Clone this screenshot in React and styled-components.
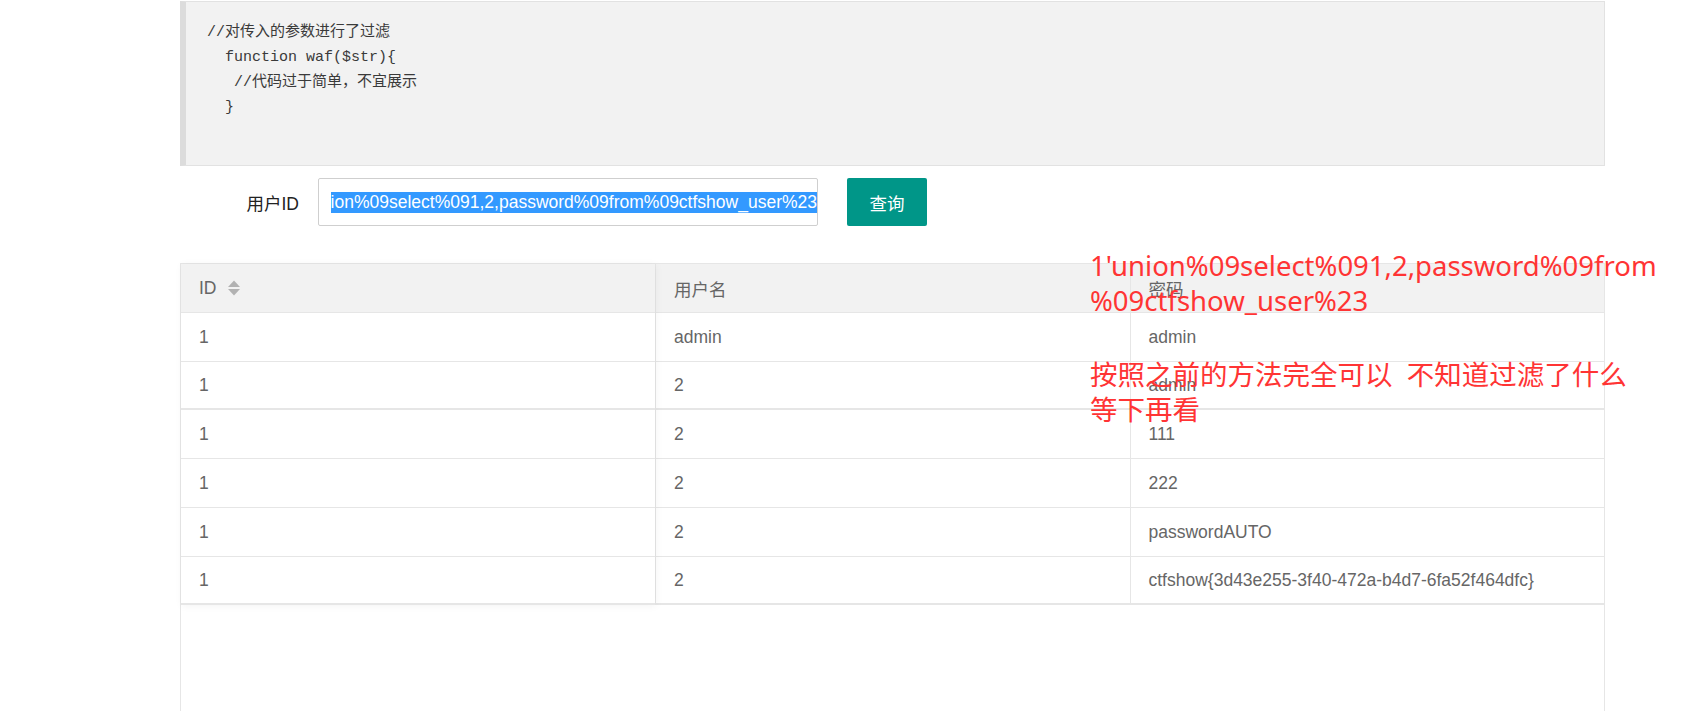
import React from "react";
import styled, { createGlobalStyle } from "styled-components";

const GlobalStyle = createGlobalStyle`
  html, body {
    margin: 0;
    padding: 0;
    background: #fff;
  }
  body {
    font-family: "Liberation Sans", Arial, "Noto Sans CJK SC", sans-serif;
    color: #333;
  }
`;

const codeLines = [
  "//对传入的参数进行了过滤",
  "  function waf($str){",
  "   //代码过于简单，不宜展示",
  "  }",
];

const rows = [
  { id: "1", name: "admin", pass: "admin" },
  { id: "1", name: "2", pass: "admin", thick: true },
  { id: "1", name: "2", pass: "111" },
  { id: "1", name: "2", pass: "222" },
  { id: "1", name: "2", pass: "passwordAUTO" },
  { id: "1", name: "2", pass: "ctfshow{3d43e255-3f40-472a-b4d7-6fa52f464dfc}", thick: true },
];

const SortIcon = () => (
  <SortSvg width="12" height="16" viewBox="0 0 12 16">
    <polygon points="6,0.5 12,7 0,7" fill="#b2b2b2" />
    <polygon points="0,9 12,9 6,15.5" fill="#b2b2b2" />
  </SortSvg>
);

const App = () => {
  return (
    <Page>
      <GlobalStyle />
      <CodeBlock>{codeLines.join("\n")}</CodeBlock>

      <SearchRow>
        <Label>用户ID</Label>
        <Field>
          <FieldInner>
            <Selected>1'union%09select%091,2,password%09from%09ctfshow_user%23</Selected>
          </FieldInner>
        </Field>
        <Button>查询</Button>
      </SearchRow>

      <Table>
        <FixedCol>
          <Cell head>
            ID <SortIcon />
          </Cell>
          {rows.map((r, i) => (
            <Cell key={i} thick={r.thick}>
              {r.id}
            </Cell>
          ))}
        </FixedCol>
        <MainPart>
          <Row>
            <Cell head divided>用户名</Cell>
            <Cell head divided>密码</Cell>
          </Row>
          {rows.map((r, i) => (
            <Row key={i}>
              <Cell divided thick={r.thick}>{r.name}</Cell>
              <Cell divided thick={r.thick}>{r.pass}</Cell>
            </Row>
          ))}
        </MainPart>
      </Table>

      <Note>
        <NoteBlock>
          1'union%09select%091,2,password%09from
          <br />
          %09ctfshow_user%23
        </NoteBlock>
        <NoteBlock gap>
          按照之前的方法完全可以&nbsp;&nbsp;不知道过滤了什么
          <br />
          等下再看
        </NoteBlock>
      </Note>
    </Page>
  );
};

export default App;

const Page = styled.div`
  position: relative;
  width: 1425px;
  margin-left: 180px;
  padding-top: 1px;
`;

const CodeBlock = styled.pre`
  margin: 0;
  height: 165px;
  box-sizing: border-box;
  padding: 18px 21px;
  background: #f2f2f2;
  border: 1px solid #e2e2e2;
  border-left: 6px solid #dcdcdc;
  font-family: "Liberation Mono", "Noto Sans CJK SC", monospace;
  font-size: 15px;
  line-height: 25px;
  color: #3a3a3a;
  white-space: pre;
`;

const SearchRow = styled.div`
  display: flex;
  align-items: center;
  margin-top: 12px;
  height: 48px;
`;

const Label = styled.label`
  width: 138px;
  box-sizing: border-box;
  padding-right: 19px;
  text-align: right;
  font-size: 17.5px;
  color: #222;
`;

const Field = styled.div`
  width: 500px;
  height: 48px;
  box-sizing: border-box;
  border: 1px solid #cfcfcf;
  border-radius: 2px;
  padding-left: 12px;
  display: flex;
  align-items: center;
  background: #fff;
`;

const FieldInner = styled.div`
  flex: 1;
  display: flex;
  justify-content: flex-end;
  overflow: hidden;
  white-space: nowrap;
  font-size: 17.5px;
`;

const Selected = styled.span`
  flex-shrink: 0;
  background: #3399ff;
  color: #fff;
  line-height: 21px;
`;

const Button = styled.button`
  margin-left: 29px;
  width: 80px;
  height: 48px;
  border: none;
  border-radius: 2px;
  background: #009688;
  color: #fff;
  font-family: inherit;
  font-size: 17.5px;
  padding: 0;
`;

const Table = styled.div`
  margin-top: 37px;
  height: 460px;
  box-sizing: border-box;
  border: 1px solid #e6e6e6;
  border-bottom: none;
  display: flex;
  align-items: flex-start;
  color: #666;
  font-size: 17.5px;
`;

const FixedCol = styled.div`
  position: relative;
  z-index: 1;
  width: 474px;
  display: flex;
  flex-direction: column;
  background: #fff;
  box-shadow: 1px 1px 8px rgba(0, 0, 0, 0.05);
`;

const MainPart = styled.div`
  flex: 1;
  display: flex;
  flex-direction: column;
`;

const Row = styled.div`
  display: grid;
  grid-template-columns: 1fr 1fr;
`;

const Cell = styled.div`
  height: ${(p) => (p.thick ? "48px" : "49px")};
  box-sizing: border-box;
  display: flex;
  align-items: center;
  padding: 0 18px;
  white-space: nowrap;
  background: ${(p) => (p.head ? "#f2f2f2" : "#fff")};
  border-bottom: ${(p) => (p.thick ? "2px" : "1px")} solid #e6e6e6;
  border-left: ${(p) => (p.divided ? "1px solid #e6e6e6" : "none")};
`;

const SortSvg = styled.svg`
  margin-left: 11px;
`;

const Note = styled.div`
  position: absolute;
  left: 910px;
  top: 248px;
  z-index: 2;
  color: #ff3434;
  font-family: "Noto Sans", "Noto Sans CJK SC", sans-serif;
  font-size: 27.5px;
  line-height: 35px;
  white-space: nowrap;
`;

const NoteBlock = styled.div`
  margin-top: ${(p) => (p.gap ? "39px" : "0")};
`;
